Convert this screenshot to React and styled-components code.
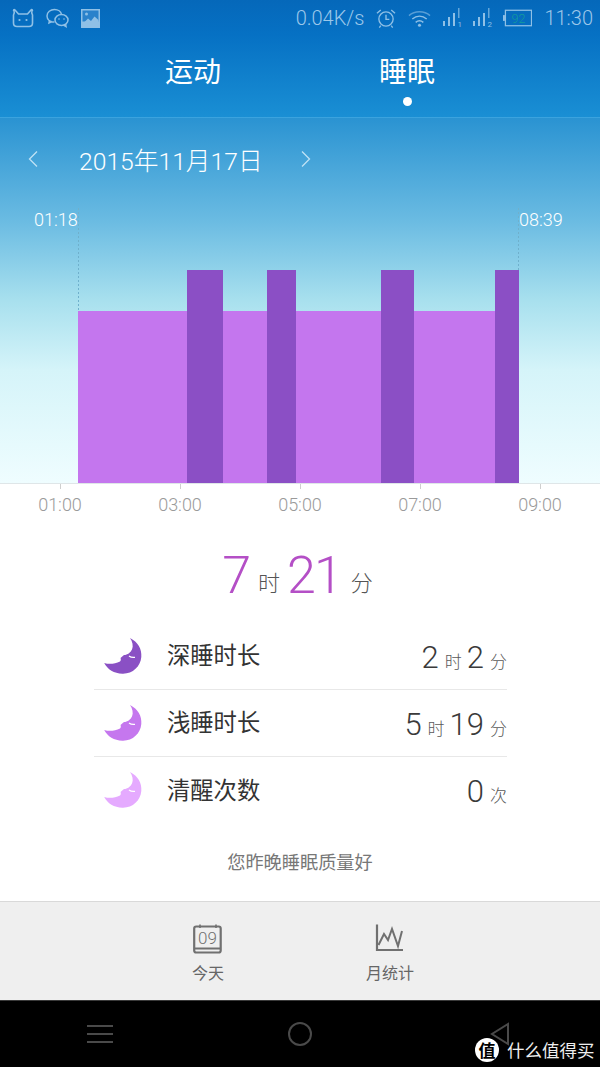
import styled, { createGlobalStyle } from "styled-components";

const GlobalStyle = createGlobalStyle`
  html, body {
    margin: 0;
    padding: 0;
    background: #fff;
  }
  * {
    box-sizing: border-box;
  }
  body {
    font-family: Roboto, "Noto Sans CJK SC", sans-serif;
  }
`;

const Page = styled.div`
  position: relative;
  width: 600px;
  height: 1067px;
  overflow: hidden;
  display: flex;
  flex-direction: column;
  background: #fff;
`;

const TopBlue = styled.div`
  height: 118px;
  flex: none;
  background: linear-gradient(#0568ba 0%, #0671c4 30%, #1a8fd4 100%);
  border-bottom: 1px solid #3ba3de;
  display: flex;
  flex-direction: column;
`;

const StatusBar = styled.div`
  height: 38px;
  display: flex;
  align-items: center;
  justify-content: space-between;
  padding: 0 7px 2px 12px;
  color: #8fc0e6;
`;

const StatusGroup = styled.div`
  display: flex;
  align-items: center;
  gap: ${(p) => p.$gap || 10}px;
`;

const StatusText = styled.span`
  font-size: 20px;
  font-weight: 300;
  color: #9cc7ea;
`;

const Tabs = styled.div`
  flex: 1;
  display: flex;
  padding-left: 86px;
`;

const Tab = styled.div`
  width: 214px;
  height: 100%;
  position: relative;
  padding-top: 13px;
  text-align: center;
  color: #fff;
  font-size: 28px;
  line-height: 38px;
  font-family: "Noto Sans CJK SC", sans-serif;
`;

const Dot = styled.span`
  position: absolute;
  left: 50%;
  top: 59px;
  width: 9px;
  height: 9px;
  margin-left: -4px;
  border-radius: 50%;
  background: #fff;
`;

const Sky = styled.div`
  height: 365px;
  flex: none;
  background: linear-gradient(#2a93d2 0%, #6abbe2 28%, #a8e0ee 50%, #d5f4f9 69%, #effdff 100%);
  display: flex;
  flex-direction: column;
`;

const DateRow = styled.div`
  height: 86px;
  display: flex;
  align-items: center;
  padding: 0 0 4px 27px;
  color: #fff;
`;

const DateText = styled.div`
  width: 183px;
  margin: 0 38px 0 40px;
  font-size: 24.7px;
  font-weight: 300;
  white-space: nowrap;
  text-align: center;
`;

const Chart = styled.div`
  flex: 1;
  position: relative;
`;

const ChartSvg = styled.svg`
  display: block;
  width: 600px;
  height: 279px;
`;

const TimeLabel = styled.span`
  position: absolute;
  top: 6px;
  left: ${(p) => p.$left}px;
  color: #fff;
  font-size: 18px;
  font-weight: 300;
  line-height: 20px;
`;

const Axis = styled.div`
  height: 42px;
  flex: none;
  display: flex;
  border-top: 1px solid #dfe6e8;
`;

const AxisTick = styled.div`
  width: 120px;
  display: flex;
  flex-direction: column;
  align-items: center;
  color: #9a9a9a;
  font-size: 18px;
  font-weight: 300;
  &::before {
    content: "";
    width: 1px;
    height: 5px;
    background: #cfcfcf;
    margin-bottom: 5px;
  }
`;

const Total = styled.div`
  height: 106px;
  flex: none;
  display: flex;
  align-items: baseline;
  justify-content: center;
  padding: 16px 5px 0 0;
  font-weight: 300;
`;

const TotalNum = styled.span`
  color: #b44fc6;
  font-size: 52px;
  line-height: 70px;
  font-weight: 300;
  letter-spacing: -2px;
`;

const TotalUnit = styled.span`
  color: #555;
  font-size: 22px;
  margin: 0 ${(p) => (p.$last ? 0 : 7)}px 0 ${(p) => (p.$last ? 10 : 9)}px;
  transform: translateY(-2px);
  font-family: "Noto Sans CJK SC", sans-serif;
  font-weight: 300;
`;

const Rows = styled.div`
  width: 413px;
  margin: -8px 0 0 94px;
  flex: none;
`;

const Row = styled.div`
  height: 67px;
  display: flex;
  align-items: center;
  padding: 0 0 0 10px;
  border-bottom: ${(p) => (p.$last ? "none" : "1px solid #e8e8e8")};
`;

const RowLabel = styled.div`
  margin-left: 25px;
  padding-bottom: 4px;
  flex: 1;
  font-family: "Noto Sans CJK SC", sans-serif;
  font-size: 23.3px;
  color: #333;
`;

const RowValue = styled.div`
  display: flex;
  align-items: baseline;
  color: #3a3a3a;
  padding-top: 2px;
`;

const ValueNum = styled.span`
  font-size: 31px;
  font-weight: 300;
  margin-left: ${(p) => (p.$tight ? 5 : 0)}px;
`;

const ValueUnit = styled.span`
  font-size: 17px;
  margin-left: 6px;
  color: #5a5a5a;
  font-family: "Noto Sans CJK SC", sans-serif;
  font-weight: 300;
`;

const Quality = styled.div`
  height: 77px;
  flex: none;
  padding-top: 24px;
  text-align: center;
  color: #777;
  font-size: 18.2px;
  font-family: "Noto Sans CJK SC", sans-serif;
`;

const Footer = styled.div`
  height: 99px;
  flex: none;
  background: #efefef;
  border-top: 1px solid #d9d9d9;
  display: flex;
  padding-left: 117px;
`;

const FooterItem = styled.div`
  width: 182px;
  display: flex;
  flex-direction: column;
  align-items: center;
  padding-top: 22px;
  color: #666;
  font-size: 16px;
  font-family: "Noto Sans CJK SC", sans-serif;
`;

const FooterLabel = styled.span`
  margin-top: 8px;
  line-height: 20px;
`;

const NavBar = styled.div`
  flex: 1;
  background: #000;
  border-top: 1px solid #3a3a3a;
  display: grid;
  grid-template-columns: 1fr 1fr 1fr;
  align-items: center;
  justify-items: center;
`;

const Watermark = styled.div`
  position: absolute;
  left: 475px;
  top: 1037px;
  display: flex;
  align-items: center;
  gap: 8px;
  color: #eee;
  font-size: 17.5px;
  font-family: "Noto Sans CJK SC", sans-serif;
`;

const WatermarkBadge = styled.span`
  width: 24px;
  height: 24px;
  border-radius: 50%;
  background: #fff;
  color: #000;
  font-size: 17px;
  font-weight: 700;
  line-height: 24px;
  text-align: center;
`;

const Chevron = ({ left }) => (
  <svg width="12" height="18" viewBox="0 0 12 18" fill="none" stroke="#bfe2f5" strokeWidth="1.3">
    <path d={left ? "M10 1.5 L2.5 9 L10 16.5" : "M2 1.5 L9.5 9 L2 16.5"} />
  </svg>
);

const Moon = ({ color }) => (
  <svg width="38" height="37" viewBox="0 0 38 37">
    <path
      d="M26 0 C34 4 38 11 37.3 19 C36.5 28.5 28.5 36 18.5 35.7 C10 35.4 3.5 31.5 0.2 25 C5 26.5 11 26 16 23.5 C17 22.5 17 21 16.5 20 L20 17 C23.5 17 26.5 14.500 28 11.500 C29.500 8 28.500 3.500 26 0 Z"
      fill={color}
    />
    <path d="M25 18 C27 19.500 29 19.600 31 19.300" stroke="#fff" strokeWidth="1.200" fill="none" />
  </svg>
);

const CalendarIcon = () => (
  <svg width="30" height="30" viewBox="0 0 30 30">
    <path d="M7 0.5 V4 M23 0.5 V4" stroke="#707070" strokeWidth="1.6" />
    <rect x="1.2" y="2.5" width="26.5" height="26" rx="2" fill="none" stroke="#707070" strokeWidth="2.2" />
    <path d="M1.2 24.5 H27.7" stroke="#707070" strokeWidth="2" />
    <text x="14.5" y="20" fontSize="17" fontFamily="Roboto, sans-serif" fontWeight="300" textAnchor="middle" fill="#707070">
      09
    </text>
  </svg>
);

const TrendIcon = () => (
  <svg width="30" height="30" viewBox="0 0 30 30" fill="none" stroke="#707070">
    <path d="M2 0.5 V26 H28" strokeWidth="2.2" />
    <path d="M3.500 21 L9 10 L13 16 L17 5 L23 22 L27 7" strokeWidth="2" />
  </svg>
);

const StatusIcons = () => (
  <StatusGroup $gap={12}>
    <svg width="22" height="20" viewBox="0 0 22 20" fill="none" stroke="#8fc0e6" strokeWidth="1.6">
      <path d="M6.500 6 L3 2 C2 1 1 2 2 3 C2.500 4 2.500 5 1.500 7 V15 C1.500 17 3 18.500 5 18.500 H17 C19 18.500 20.500 17 20.500 15 V7 C19.500 5 19.500 4 20 3 C21 2 20 1 19 2 L15.500 6 Z" />
      <circle cx="7.500" cy="12" r="1.100" fill="#8fc0e6" stroke="none" />
      <circle cx="14.500" cy="12" r="1.100" fill="#8fc0e6" stroke="none" />
    </svg>
    <svg width="23" height="20" viewBox="0 0 23 20" fill="none" stroke="#8fc0e6" strokeWidth="1.5">
      <path d="M8.500 14 C4 14 1 11.500 1 8 C1 4 4.500 1.500 8.500 1.500 C12 1.500 15 3.500 15.500 6.500 M3.500 12 L3 15 L6 13.500" />
      <ellipse cx="15.500" cy="12" rx="6.500" ry="5.500" />
      <path d="M19.500 16 L20 18.500 L17.500 17" />
      <circle cx="13" cy="11" r=".8" fill="#8fc0e6" stroke="none" />
      <circle cx="18" cy="11" r=".8" fill="#8fc0e6" stroke="none" />
    </svg>
    <svg width="19" height="19" viewBox="0 0 19 19">
      <rect width="19" height="19" fill="#8fc0e6" />
      <rect x="1.500" y="1.500" width="16" height="11" fill="#2a82cb" />
      <circle cx="5.500" cy="5" r="1.500" fill="#8fc0e6" />
      <path d="M1.500 15 L7 9.500 L10 12 L13.500 7.500 L17.500 11 V14 H1.500 Z" fill="#8fc0e6" />
    </svg>
  </StatusGroup>
);

const Signal = ({ sim }) => (
  <svg width="20" height="20" viewBox="0 0 20 20" fill="#8fc0e6">
    <rect x="0" y="13" width="2" height="5" />
    <rect x="5" y="9" width="2" height="9" />
    <rect x="10" y="5" width="2" height="13" />
    <rect x="15" y="0" width="1.500" height="10" opacity="0.7" />
    <text x="14.500" y="19" fontSize="8" fontFamily="Roboto, sans-serif">{sim}</text>
  </svg>
);

const bars = [
  [187, 36],
  [267, 29],
  [381, 33],
  [495, 24],
];
const ticks = ["01:00", "03:00", "05:00", "07:00", "09:00"];

const rows = [
  { label: "深睡时长", color: "#8a50c4", hours: "2", mins: "2" },
  { label: "浅睡时长", color: "#c577ee", hours: "5", mins: "19" },
  { label: "清醒次数", color: "#e5aaff", count: "0", last: true },
];

export default function App() {
  return (
    <Page>
      <GlobalStyle />
      <TopBlue>
        <StatusBar>
          <StatusIcons />
          <StatusGroup $gap={12}>
            <StatusText>0.04K/s</StatusText>
            <svg width="20" height="21" viewBox="0 0 21 21" fill="none" stroke="#8fc0e6" strokeWidth="1.4">
              <circle cx="10.500" cy="11" r="7.500" />
              <path d="M10.500 6.500 V11.500 H14 M1 5 L5 1.500 M20 5 L16 1.500 M5 18 L3.500 20 M16 18 L17.500 20" />
            </svg>
            <svg width="23" height="19" viewBox="0 0 24 19" fill="none" stroke="#8fc0e6" strokeWidth="1.500">
              <path d="M1 6.500 C7 1 17 1 23 6.500" opacity="0.6" />
              <path d="M4.500 10 C9 6 15 6 19.500 10" />
              <path d="M8 13.500 C10.500 11.500 13.500 11.500 16 13.500" />
              <circle cx="12" cy="16.500" r="1.600" fill="#8fc0e6" stroke="none" />
            </svg>
            <StatusGroup $gap={10}>
              <Signal sim="1" />
              <Signal sim="2" />
              <svg width="29" height="18" viewBox="0 0 30 18" fill="none">
                <rect x="2.500" y="1" width="27" height="16" stroke="#8fc0e6" strokeWidth="1.300" />
                <rect x="0" y="6" width="2" height="6" fill="#8fc0e6" />
                <text x="16" y="14" fontSize="13" fontFamily="Roboto, sans-serif" fontWeight="300" textAnchor="middle" fill="#129c9c">
                  92
                </text>
              </svg>
            </StatusGroup>
            <StatusText>11:30</StatusText>
          </StatusGroup>
        </StatusBar>
        <Tabs>
          <Tab>运动</Tab>
          <Tab>
            睡眠
            <Dot />
          </Tab>
        </Tabs>
      </TopBlue>
      <Sky>
        <DateRow>
          <Chevron left />
          <DateText>2015年11月17日</DateText>
          <Chevron />
        </DateRow>
        <Chart>
          <ChartSvg viewBox="0 0 600 279">
            <path d="M78.500 4 V107 M518.500 4 V66" stroke="#6fb0cc" strokeDasharray="2 2" />
            <rect x="78" y="107" width="441" height="172" fill="#c476ee" />
            {bars.map(([x, w]) => (
              <rect key={x} x={x} y="66" width={w} height="213" fill="#8b4fc5" />
            ))}
          </ChartSvg>
          <TimeLabel $left={34}>01:18</TimeLabel>
          <TimeLabel $left={519}>08:39</TimeLabel>
        </Chart>
      </Sky>
      <Axis>
        {ticks.map((t) => (
          <AxisTick key={t}>{t}</AxisTick>
        ))}
      </Axis>
      <Total>
        <TotalNum>7</TotalNum>
        <TotalUnit>时</TotalUnit>
        <TotalNum>21</TotalNum>
        <TotalUnit $last>分</TotalUnit>
      </Total>
      <Rows>
        {rows.map((r) => (
          <Row key={r.label} $last={r.last}>
            <Moon color={r.color} />
            <RowLabel>{r.label}</RowLabel>
            <RowValue>
              {r.last ? (
                <>
                  <ValueNum>{r.count}</ValueNum>
                  <ValueUnit>次</ValueUnit>
                </>
              ) : (
                <>
                  <ValueNum>{r.hours}</ValueNum>
                  <ValueUnit>时</ValueUnit>
                  <ValueNum $tight>{r.mins}</ValueNum>
                  <ValueUnit>分</ValueUnit>
                </>
              )}
            </RowValue>
          </Row>
        ))}
      </Rows>
      <Quality>您昨晚睡眠质量好</Quality>
      <Footer>
        <FooterItem>
          <CalendarIcon />
          <FooterLabel>今天</FooterLabel>
        </FooterItem>
        <FooterItem>
          <TrendIcon />
          <FooterLabel>月统计</FooterLabel>
        </FooterItem>
      </Footer>
      <NavBar>
        <svg width="26" height="20" viewBox="0 0 26 20" stroke="#4a4a4a" strokeWidth="2">
          <path d="M0 2 H26 M0 10 H26 M0 18 H26" />
        </svg>
        <svg width="24" height="24" viewBox="0 0 24 24" fill="none" stroke="#4a4a4a" strokeWidth="2">
          <circle cx="12" cy="12" r="11" />
        </svg>
        <svg width="20" height="24" viewBox="0 0 20 24" fill="none" stroke="#4a4a4a" strokeWidth="2">
          <path d="M18 2 V22 L2 12 Z" />
        </svg>
      </NavBar>
      <Watermark>
        <WatermarkBadge>值</WatermarkBadge>
        什么值得买
      </Watermark>
    </Page>
  );
}
